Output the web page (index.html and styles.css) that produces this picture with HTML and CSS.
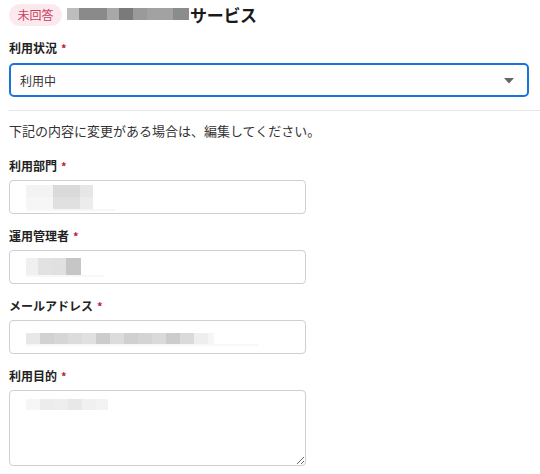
FILE: index.html
```html
<!DOCTYPE html>
<html lang="ja">
<head>
<meta charset="utf-8">
<link rel="stylesheet" href="styles.css">
</head>
<body>
<div class="page">
  <div class="header">
    <span class="badge">未回答</span>
    <span class="mosaic title-mosaic">
      <span class="c w12 g-bd"></span><span class="c w28 g-8a"></span><span class="c w12 g-a8"></span><span class="c w14 g-7a"></span><span class="c w14 g-9a"></span><span class="c w26 g-a2"></span><span class="c w16 g-8c"></span>
    </span>
    <span class="title">サービス</span>
  </div>

  <div class="field first">
    <div class="label">利用状況<span class="req">*</span></div>
    <div class="select">
      <span class="select-value">利用中</span>
      <svg class="caret" width="10" height="6" viewBox="0 0 10 6"><path d="M0 0h10L5 5.5z" fill="#666"/></svg>
    </div>
  </div>

  <hr class="divider">

  <p class="note">下記の内容に変更がある場合は、編集してください。</p>

  <div class="field after-note">
    <div class="label">利用部門<span class="req">*</span></div>
    <div class="input">
      <div class="blur">
        <div class="row"><span class="c w27 g-f3"></span><span class="c w27 g-da"></span><span class="c w13 g-e6"></span></div>
        <div class="row"><span class="c w27 g-f6"></span><span class="c w27 g-e0"></span><span class="c w13 g-ec"></span></div>
        <div class="fade w89"></div>
      </div>
    </div>
  </div>

  <div class="field">
    <div class="label">運用管理者<span class="req">*</span></div>
    <div class="input">
      <div class="blur b2">
        <div class="row tall"><span class="c w12 g-f0"></span><span class="c w14 g-e2"></span><span class="c w14 g-e0"></span><span class="c w15 g-c6"></span></div>
        <div class="fade w78"></div>
      </div>
    </div>
  </div>

  <div class="field">
    <div class="label">メールアドレス<span class="req">*</span></div>
    <div class="input">
      <div class="blur b3">
        <div class="row mid"><span class="c w14 g-e8"></span><span class="c w14 g-d2"></span><span class="c w14 g-d6"></span><span class="c w14 g-dc"></span><span class="c w14 g-e0"></span><span class="c w14 g-cc"></span><span class="c w14 g-dc"></span><span class="c w14 g-d0"></span><span class="c w14 g-d4"></span><span class="c w14 g-da"></span><span class="c w14 g-cc"></span><span class="c w14 g-da"></span><span class="c w14 g-ee"></span><span class="c w6 g-f6"></span></div>
        <div class="fade w233"></div>
      </div>
    </div>
  </div>

  <div class="field">
    <div class="label">利用目的<span class="req">*</span></div>
    <div class="textarea">
      <div class="blur b4">
        <div class="row mid"><span class="c w14 g-f6"></span><span class="c w14 g-ec"></span><span class="c w14 g-ee"></span><span class="c w14 g-e8"></span><span class="c w14 g-f0"></span><span class="c w12 g-f3"></span></div>
      </div>
    </div>
  </div>
</div>
</body>
</html>
```

FILE: styles.css
```css
* { box-sizing: border-box; }
html, body { margin: 0; padding: 0; background: #fff; }
body {
  font-family: "Noto Sans CJK JP", "Noto Sans", sans-serif;
  color: #222;
  width: 540px;
  height: 474px;
  overflow: hidden;
}
.page { padding: 4px 0 0 9px; }

.header { display: flex; align-items: center; height: 22px; }
.badge {
  display: inline-flex; align-items: center; justify-content: center;
  height: 22px; width: 53px; border-radius: 11px;
  background: #fce9ee; color: #c9405e;
  font-size: 12px; line-height: 1;
}
.mosaic { display: flex; }
.title-mosaic { margin-left: 5px; height: 12px; margin-top: -2px; }
.title { font-size: 17px; font-weight: bold; margin-left: 1px; line-height: 22px; color: #1a1a1a; letter-spacing: -0.3px; }

.c { display: block; height: 100%; }
.w6 { width: 6px; } .w12 { width: 12px; } .w13 { width: 13px; } .w14 { width: 14px; } .w15 { width: 15px; }
.w16 { width: 16px; } .w26 { width: 26px; } .w27 { width: 27px; } .w28 { width: 28px; }
.w78 { width: 78px; } .w89 { width: 89px; } .w233 { width: 233px; }
.g-bd { background: #bdbdbd; } .g-8a { background: #8a8a8a; } .g-a8 { background: #a8a8a8; }
.g-7a { background: #7a7a7a; } .g-9a { background: #9a9a9a; } .g-a2 { background: #a2a2a2; }
.g-8c { background: #8c8c8c; } .g-f3 { background: #f3f3f3; } .g-da { background: #dadada; }
.g-e6 { background: #e6e6e6; } .g-f6 { background: #f6f6f6; } .g-e0 { background: #e0e0e0; }
.g-ec { background: #ececec; } .g-f0 { background: #f0f0f0; } .g-e2 { background: #e2e2e2; }
.g-c6 { background: #c6c6c6; } .g-e8 { background: #e8e8e8; } .g-d2 { background: #d2d2d2; }
.g-d6 { background: #d6d6d6; } .g-dc { background: #dcdcdc; } .g-cc { background: #cccccc; }
.g-d0 { background: #d0d0d0; } .g-d4 { background: #d4d4d4; } .g-ee { background: #eeeeee; }

.field { display: flex; flex-direction: column; gap: 6px; margin-top: 14px; }
.field.first { gap: 7px; }
.field.after-note { margin-top: 17px; }
.label { font-size: 12px; font-weight: bold; line-height: 16px; color: #222; display: flex; align-items: center; }
.req { color: #c0143c; margin-left: 4px; font-size: 11px; }

.select {
  width: 520px; height: 34px;
  border: 2px solid #1b74d8; border-radius: 5px;
  display: flex; align-items: center; justify-content: space-between;
  padding: 0 13px 0 9px;
}
.select-value { font-size: 12px; color: #333; }
.caret { display: block; margin-top: 1px; }

.divider { border: 0; border-top: 1px solid #e6e6e6; margin: 13px 0 0; }
.note { margin: 10px 0 0; font-size: 13px; line-height: 20px; color: #333; }

.input, .textarea {
  width: 297px; height: 34px;
  border: 1px solid #cfcfcf; border-radius: 4px;
  padding: 4px 0 0 16px;
}
.textarea { height: 76px; resize: both; overflow: auto; padding-top: 8px; }
.blur { display: flex; flex-direction: column; }
.row { display: flex; height: 12px; }
.row.tall { height: 17px; margin-top: 3px; }
.row.mid { height: 11px; margin-top: 8px; }
.b4 .row.mid { margin-top: 0; }
.fade { height: 2px; background: #f7f7f7; }
```
